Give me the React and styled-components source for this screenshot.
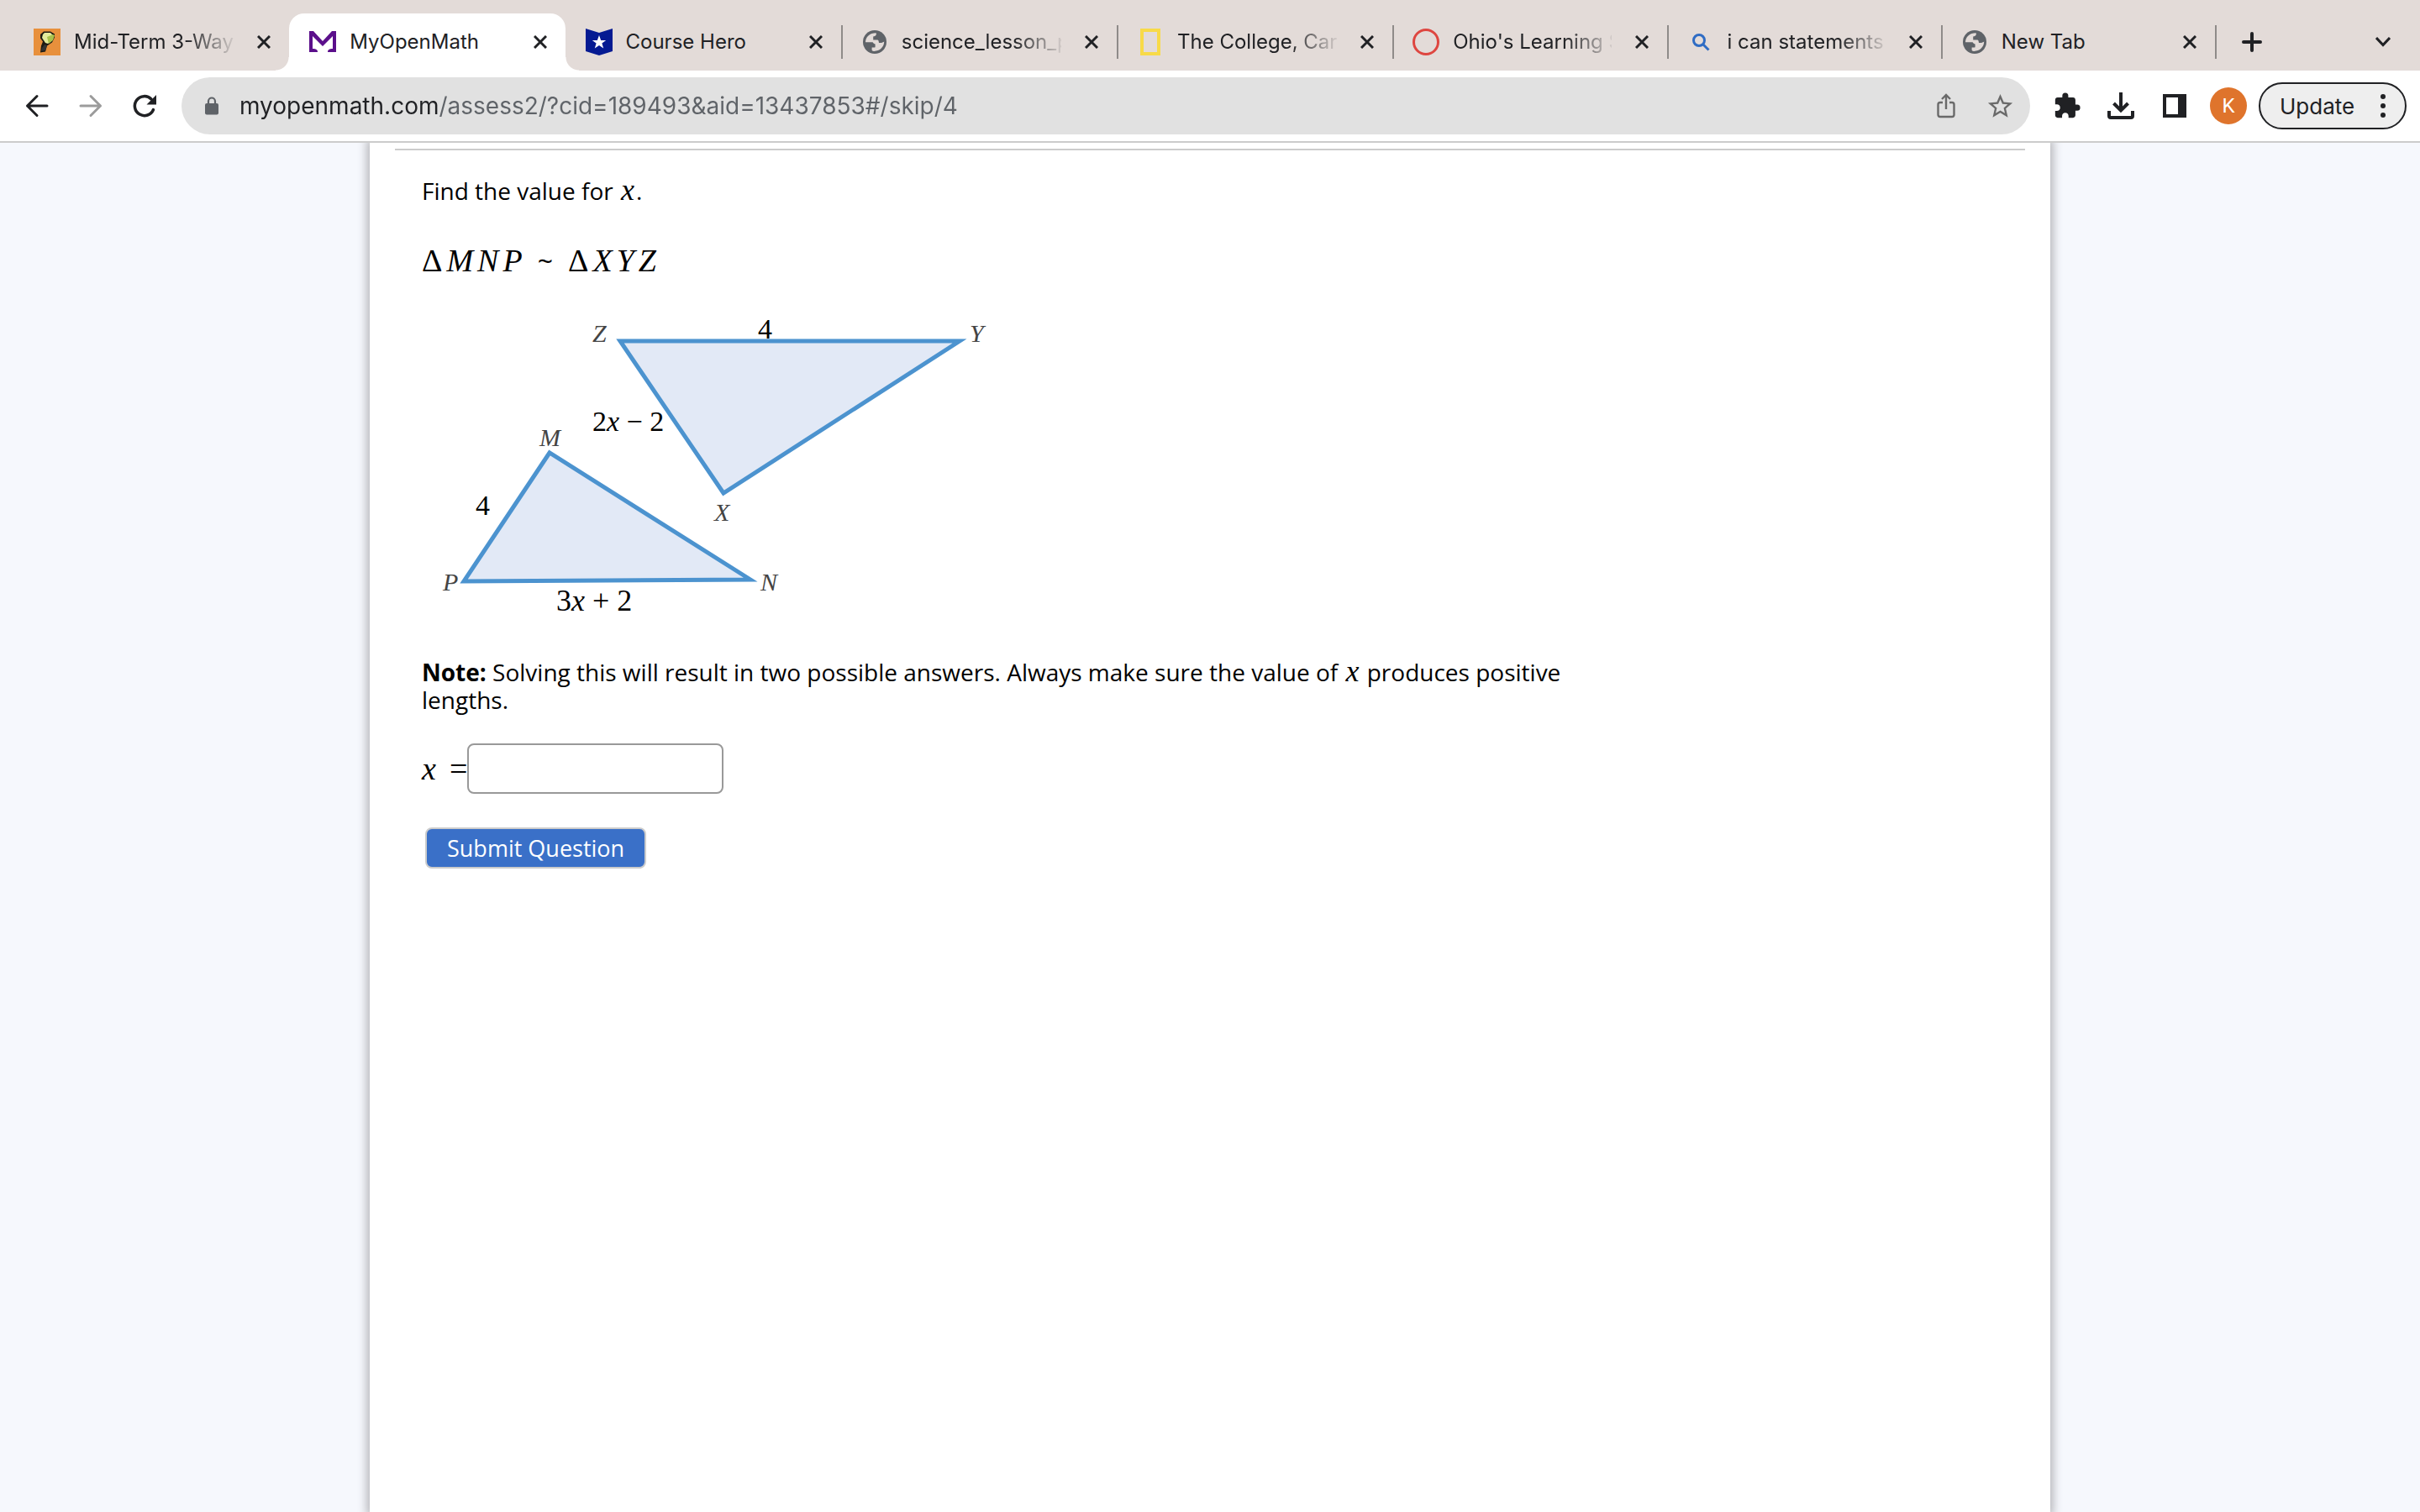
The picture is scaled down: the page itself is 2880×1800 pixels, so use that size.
import React, { useState } from 'react';
import styled, { createGlobalStyle } from 'styled-components';
import { MdExtension, MdStarBorder } from 'react-icons/md';

const GlobalStyle = createGlobalStyle`
  * {
    box-sizing: border-box;
  }
  body {
    margin: 0;
    background-color: #f6f8fd;
    color: #000;
    font-family: 'Open Sans', 'Noto Sans', sans-serif;
  }
  button {
    border: none;
    background: none;
    padding: 0;
    cursor: pointer;
  }
`;

const Page = styled.div`
  display: flex;
  flex-direction: column;
  min-height: 100vh;
`;

const TabStrip = styled.div`
  display: flex;
  padding: 16px 0 0 16px;
  background-color: #e3dbd8;
  font-family: Inter, Roboto, sans-serif;
`;

const TabList = styled.div`
  flex: 1;
  min-width: 0;
  display: grid;
  grid-template-columns: repeat(5, minmax(0, 328fr)) repeat(3, minmax(0, 326fr));
`;

const TabItem = styled.div`
  position: relative;
  display: flex;
  align-items: center;
  height: 68px;
  padding: 0 22px 0 24px;
  color: #202124;
  ${(props) => props.$active && `
    background-color: #fff;
    border-radius: 18px 18px 0 0;
    &::before,
    &::after {
      content: '';
      position: absolute;
      bottom: 0;
      width: 16px;
      height: 16px;
    }
    &::before {
      right: 100%;
      background: radial-gradient(circle at 0 0, transparent 15px, #fff 16px);
    }
    &::after {
      left: 100%;
      background: radial-gradient(circle at 100% 0, transparent 15px, #fff 16px);
    }
  `}
`;

const TabDivider = styled.span`
  position: absolute;
  right: -2px;
  width: 2px;
  height: 40px;
  background-color: #8f8b89;
`;

const Favicon = styled.span`
  display: flex;
  justify-content: center;
  width: 32px;
  margin-right: 16px;
`;

const TabTitle = styled.span`
  flex: 1;
  min-width: 0;
  overflow: hidden;
  white-space: nowrap;
  font-size: 24px;
  line-height: 32px;
  ${(props) => props.$faded && `
    mask-image: linear-gradient(to right, #000 70%, transparent 103%);
  `}
`;

const CloseButton = styled.button`
  display: flex;
  margin-left: 28px;
  color: #202124;
`;

const StripActions = styled.div`
  display: flex;
  align-items: center;
  justify-content: space-between;
  width: 244px;
  padding: 0 22px;
`;

const StripButton = styled.button`
  display: flex;
  align-items: center;
  justify-content: center;
  width: 44px;
  height: 44px;
`;

const Toolbar = styled.div`
  display: flex;
  align-items: center;
  height: 86px;
  padding: 0 16px 0 12px;
  background-color: #fff;
  border-bottom: 2px solid #ccc;
  font-family: Inter, Roboto, sans-serif;
`;

const ToolButton = styled.button`
  display: flex;
  align-items: center;
  justify-content: center;
  width: 64px;
  height: 64px;
  color: ${(props) => props.$color || '#202124'};
`;

const AddressBar = styled.div`
  flex: 1;
  display: flex;
  align-items: center;
  height: 68px;
  margin: 0 12px;
  padding: 0 4px 0 27px;
  border-radius: 34px;
  background-color: #e1e1e1;
`;

/* the host is darker than the rest of the address */
const AddressInput = styled.input`
  flex: 1;
  min-width: 0;
  margin-left: 24px;
  padding: 0;
  border: none;
  outline: none;
  font-family: inherit;
  font-size: 28px;
  line-height: 36px;
  color: #5f6368;
  background: linear-gradient(to right, #202124 236px, #5f6368 236px);
  background-clip: text;
  -webkit-text-fill-color: transparent;
`;

const Avatar = styled.span`
  display: flex;
  align-items: center;
  justify-content: center;
  width: 44px;
  height: 44px;
  border-radius: 50%;
  background-color: #df742c;
  color: #fff;
  font-family: Roboto, sans-serif;
  font-size: 24px;
`;

const UpdateButton = styled.button`
  display: flex;
  align-items: center;
  justify-content: space-between;
  width: 176px;
  height: 56px;
  margin-left: 4px;
  padding: 0 23px;
  border: 2px solid #202124;
  border-radius: 28px;
  background-color: #eee;
  color: #202124;
  font-family: inherit;
  font-size: 26px;
`;

const Viewport = styled.main`
  flex: 1;
  display: flex;
  justify-content: center;
  overflow: hidden;
`;

const Sheet = styled.div`
  width: 100%;
  max-width: 2000px;
  padding: 7px 30px 0;
  background-color: #fff;
  box-shadow: 0 0 10px 4px #b9b9bd;
`;

const Question = styled.form`
  padding: 32px;
  border-top: 2px solid #ccc;
`;

const Prompt = styled.p`
  max-width: 1400px;
  margin: 0;
  font-size: 28px;
  line-height: 33px;
`;

const Variable = styled.i`
  margin: 0 2px;
  font-family: 'Liberation Serif', serif;
  font-size: 36px;
  line-height: 1px;
`;

const Statement = styled.div`
  display: flex;
  align-items: baseline;
  gap: 18px;
  margin: 44px 0 38px;
  font-size: 32px;
  line-height: 44px;
`;

const MathGroup = styled.span`
  display: flex;
  gap: 5px;
  font-family: 'Liberation Serif', serif;
  font-size: 38px;
`;

const Figure = styled.svg`
  display: block;
  width: 680px;
  margin-bottom: 45px;
`;

const VertexLabel = styled.text`
  font: italic 30px 'Liberation Serif', serif;
  fill: #444;
`;

const SideLabel = styled.text`
  font-family: 'Liberation Serif', serif;
  font-size: ${(props) => props.$size || 34}px;
`;

const AnswerRow = styled.div`
  display: flex;
  align-items: center;
  margin: 35px 0 40px;
`;

const AnswerLabel = styled.label`
  display: flex;
  gap: 16px;
  font-family: 'Liberation Serif', serif;
  font-size: 38px;
  line-height: 40px;
`;

const AnswerInput = styled.input`
  width: 305px;
  height: 60px;
  padding: 4px 12px;
  border: 2px solid #999;
  border-radius: 8px;
  font-family: inherit;
  font-size: 28px;
`;

const SubmitButton = styled.button`
  height: 49px;
  margin-left: 4px;
  padding: 0 24px;
  border: 2px solid #ccc;
  border-radius: 8px;
  background-color: #3a70c8;
  color: #fff;
  font-family: inherit;
  font-size: 27px;
  line-height: 44px;
`;

const CloseIcon = () => (
  <svg width="16" height="16" viewBox="0 0 16 16" stroke="currentColor" strokeWidth="3">
    <path d="M1 1l14 14M15 1L1 15" />
  </svg>
);

const BulbIcon = () => (
  <svg width="32" height="32" viewBox="0 0 32 32">
    <rect width="32" height="32" fill="#e8903c" />
    <path d="M8 7L12 3.500h8l5 3v4l-3 6-6 4-2 7-6 1 1-8 2-5-3-4z" fill="#1d1a12" />
    <path d="M11 7l2-2h7l3 3-1 6-5 4-3-1-4-6z" fill="#e3ea9c" />
    <path d="M16 10l7-3 2 1-2 6-5 4-1-4z" fill="#a9c24c" />
    <path d="M13 19l3 1-2 6-5 1 1-4z" fill="#333" />
  </svg>
);

const MomIcon = () => (
  <svg width="32" height="26" viewBox="0 0 32 26" fill="#5b0f8b">
    <path d="M0 0h5l11 12L27 0h5v25H22c0-3 2-4 6-4V6L16 18 4 6v15c4 0 6 1 6 4H0z" />
  </svg>
);

const HeroIcon = () => (
  <svg width="32" height="32" viewBox="0 0 32 32">
    <path d="M0 0l16 5 16-5v27l-16 5-16-5z" fill="#051a92" />
    <path d="M16 8l2.200 6h6l-4.800 3.600 1.800 6L16 20l-5.200 3.600 1.800-6L7.800 14h6z" fill="#fff" />
  </svg>
);

const GlobeIcon = () => (
  <svg width="28" height="28" viewBox="0 0 28 28">
    <circle cx="14" cy="14" r="14" fill="#5f6368" />
    <path
      d="M3 14.200C3 8 8 3.200 15.600 3.200c.8 2.200-.2 3.800-3.400 4.400v3.800h5c1 0 1.600 1 1.800 3.600h2.800c1.600 0 2.200-1 3.400-1.400C25.200 20 20 25 13 24.900c-1.400 0-2.400-.6-2.400-1.400V20.400h3c.8 0 1-.5 1-1v-2.800c-1.400-.4-2-.9-3-2.400z"
      fill="#e3dbd8"
    />
  </svg>
);

const FrameIcon = () => (
  <svg width="24" height="32" viewBox="0 0 24 32">
    <rect x="2" y="2" width="20" height="28" fill="none" stroke="#f8da48" strokeWidth="4" />
  </svg>
);

const RingIcon = () => (
  <svg width="32" height="32" viewBox="0 0 32 32">
    <circle cx="16" cy="16" r="14.500" fill="none" stroke="#de4640" strokeWidth="3" />
  </svg>
);

const SearchIcon = () => (
  <svg width="22" height="22" viewBox="0 0 22 22" fill="none" stroke="#2f6cc4" strokeWidth="3">
    <circle cx="9" cy="9" r="6.500" />
    <path d="M13.500 13.500l7 7" />
  </svg>
);

const tabs = [
  { title: 'Mid-Term 3-Way', icon: <BulbIcon />, faded: true },
  { title: 'MyOpenMath', icon: <MomIcon />, active: true },
  { title: 'Course Hero', icon: <HeroIcon />, divider: true },
  { title: 'science_lesson_p', icon: <GlobeIcon />, faded: true, divider: true },
  { title: 'The College, Care', icon: <FrameIcon />, faded: true, divider: true },
  { title: "Ohio's Learning S", icon: <RingIcon />, faded: true, divider: true },
  { title: 'i can statements', icon: <SearchIcon />, faded: true, divider: true },
  { title: 'New Tab', icon: <GlobeIcon />, divider: true },
];

const Tabs = () => (
  <TabStrip>
    <TabList role="tablist">
      {tabs.map((tab) => (
        <TabItem key={tab.title} role="tab" aria-selected={!!tab.active} $active={tab.active}>
          <Favicon>{tab.icon}</Favicon>
          <TabTitle $faded={tab.faded}>{tab.title}</TabTitle>
          <CloseButton aria-label="Close tab"><CloseIcon /></CloseButton>
          {tab.divider && <TabDivider />}
        </TabItem>
      ))}
    </TabList>
    <StripActions>
      <StripButton aria-label="New tab">
        <svg width="24" height="24" viewBox="0 0 24 24" stroke="#202124" strokeWidth="4" strokeLinecap="round">
          <path d="M12 2v20M2 12h20" />
        </svg>
      </StripButton>
      <StripButton aria-label="Search tabs">
        <svg width="18" height="12" viewBox="0 0 18 12" fill="none" stroke="#202124" strokeWidth="3">
          <path d="M1 1l8 8.500L17 1" />
        </svg>
      </StripButton>
    </StripActions>
  </TabStrip>
);

const BrowserToolbar = () => {
  const [address, setAddress] = useState('myopenmath.com/assess2/?cid=189493&aid=13437853#/skip/4');

  return (
    <Toolbar>
      <ToolButton aria-label="Back">
        <svg width="28" height="28" viewBox="0 0 28 28" fill="none" stroke="currentColor" strokeWidth="3" strokeLinecap="round" strokeLinejoin="round">
          <path d="M26 14H2.500M14 2.500L2.500 14 14 25.500" />
        </svg>
      </ToolButton>
      <ToolButton aria-label="Forward" $color="#9c9c9c">
        <svg width="28" height="28" viewBox="0 0 28 28" fill="none" stroke="currentColor" strokeWidth="3" strokeLinecap="round" strokeLinejoin="round">
          <path d="M2 14h23.500M14 2.500L25.500 14 14 25.500" />
        </svg>
      </ToolButton>
      <ToolButton aria-label="Reload">
        <svg width="32" height="32" viewBox="0 0 32 32">
          <path d="M26.500 20.500A11.500 11.500 0 1 1 24 8" fill="none" stroke="currentColor" strokeWidth="3.500" strokeLinecap="round" />
          <path d="M30 3v11.500H18.500z" fill="currentColor" />
        </svg>
      </ToolButton>
      <AddressBar>
        <svg width="18" height="22" viewBox="0 0 18 22">
          <rect x="1" y="8" width="16" height="13.500" rx="2" fill="#5f6368" />
          <path d="M5 9V5.500a4 4 0 0 1 8 0V9" fill="none" stroke="#5f6368" strokeWidth="2.200" />
        </svg>
        <AddressInput aria-label="Address" value={address} onChange={(e) => setAddress(e.target.value)} />
        <ToolButton aria-label="Share" $color="#6a6a6a">
          <svg width="22" height="30" viewBox="0 0 22 30" fill="none" stroke="currentColor" strokeWidth="2.400">
            <path d="M7 11H4a2.500 2.500 0 0 0-2.500 2.500v12A2.500 2.500 0 0 0 4 28h14a2.500 2.500 0 0 0 2.500-2.500v-12A2.500 2.500 0 0 0 18 11h-3M11 19V2M6 7l5-5 5 5" />
          </svg>
        </ToolButton>
        <ToolButton aria-label="Bookmark" $color="#6a6a6a"><MdStarBorder size={35} /></ToolButton>
      </AddressBar>
      <ToolButton aria-label="Extensions"><MdExtension size={34} /></ToolButton>
      <ToolButton aria-label="Downloads">
        <svg width="32" height="32" viewBox="0 0 32 32" fill="none" stroke="currentColor" strokeWidth="4">
          <path d="M16 0v21M7.500 13l8.500 8.500 8.500-8.500M2 22v6a2 2 0 0 0 2 2h24a2 2 0 0 0 2-2v-6" />
        </svg>
      </ToolButton>
      <ToolButton aria-label="Side panel">
        <svg width="28" height="28" viewBox="0 0 28 28">
          <path d="M0 0h28v28H0zM4 4v20h14V4z" fill="currentColor" fillRule="evenodd" />
        </svg>
      </ToolButton>
      <ToolButton aria-label="Profile"><Avatar>K</Avatar></ToolButton>
      <UpdateButton>
        Update
        <svg width="6" height="28" viewBox="0 0 6 28" fill="currentColor">
          <circle cx="3" cy="3" r="3" />
          <circle cx="3" cy="14" r="3" />
          <circle cx="3" cy="25" r="3" />
        </svg>
      </UpdateButton>
    </Toolbar>
  );
};

const Triangles = () => (
  <Figure viewBox="0 0 680 368" role="img" aria-label="Triangles MNP and XYZ">
    <g fill="#e2e9f6" stroke="#4c93cf" strokeWidth="5">
      <path d="M236 35h404L359 216z" />
      <path d="M152 168L50 321l341-2z" />
    </g>
    <VertexLabel x="203" y="36">Z</VertexLabel>
    <VertexLabel x="652" y="36">Y</VertexLabel>
    <VertexLabel x="140" y="160">M</VertexLabel>
    <VertexLabel x="348" y="249">X</VertexLabel>
    <VertexLabel x="25" y="332">P</VertexLabel>
    <VertexLabel x="403" y="332">N</VertexLabel>
    <SideLabel x="400" y="32">4</SideLabel>
    <SideLabel x="64" y="242">4</SideLabel>
    <SideLabel x="203" y="142">2<tspan fontStyle="italic">x</tspan> − 2</SideLabel>
    <SideLabel x="160" y="356" $size={36}>3<tspan fontStyle="italic">x</tspan> + 2</SideLabel>
  </Figure>
);

const App = () => {
  const [answer, setAnswer] = useState('');

  const handleSubmit = (e) => {
    e.preventDefault();
  };

  return (
    <Page>
      <GlobalStyle />
      <Tabs />
      <BrowserToolbar />
      <Viewport>
        <Sheet>
          <Question onSubmit={handleSubmit}>
            <Prompt>Find the value for <Variable>x</Variable>.</Prompt>
            <Statement>
              <MathGroup><span>Δ</span><i>M</i><i>N</i><i>P</i></MathGroup>
              ~
              <MathGroup><span>Δ</span><i>X</i><i>Y</i><i>Z</i></MathGroup>
            </Statement>
            <Triangles />
            <Prompt>
              <b>Note:</b> Solving this will result in two possible answers. Always make sure the value of <Variable>x</Variable> produces positive lengths.
            </Prompt>
            <AnswerRow>
              <AnswerLabel htmlFor="answer"><i>x</i> =</AnswerLabel>
              <AnswerInput id="answer" value={answer} onChange={(e) => setAnswer(e.target.value)} />
            </AnswerRow>
            <SubmitButton type="submit">Submit Question</SubmitButton>
          </Question>
        </Sheet>
      </Viewport>
    </Page>
  );
};

export default App;
